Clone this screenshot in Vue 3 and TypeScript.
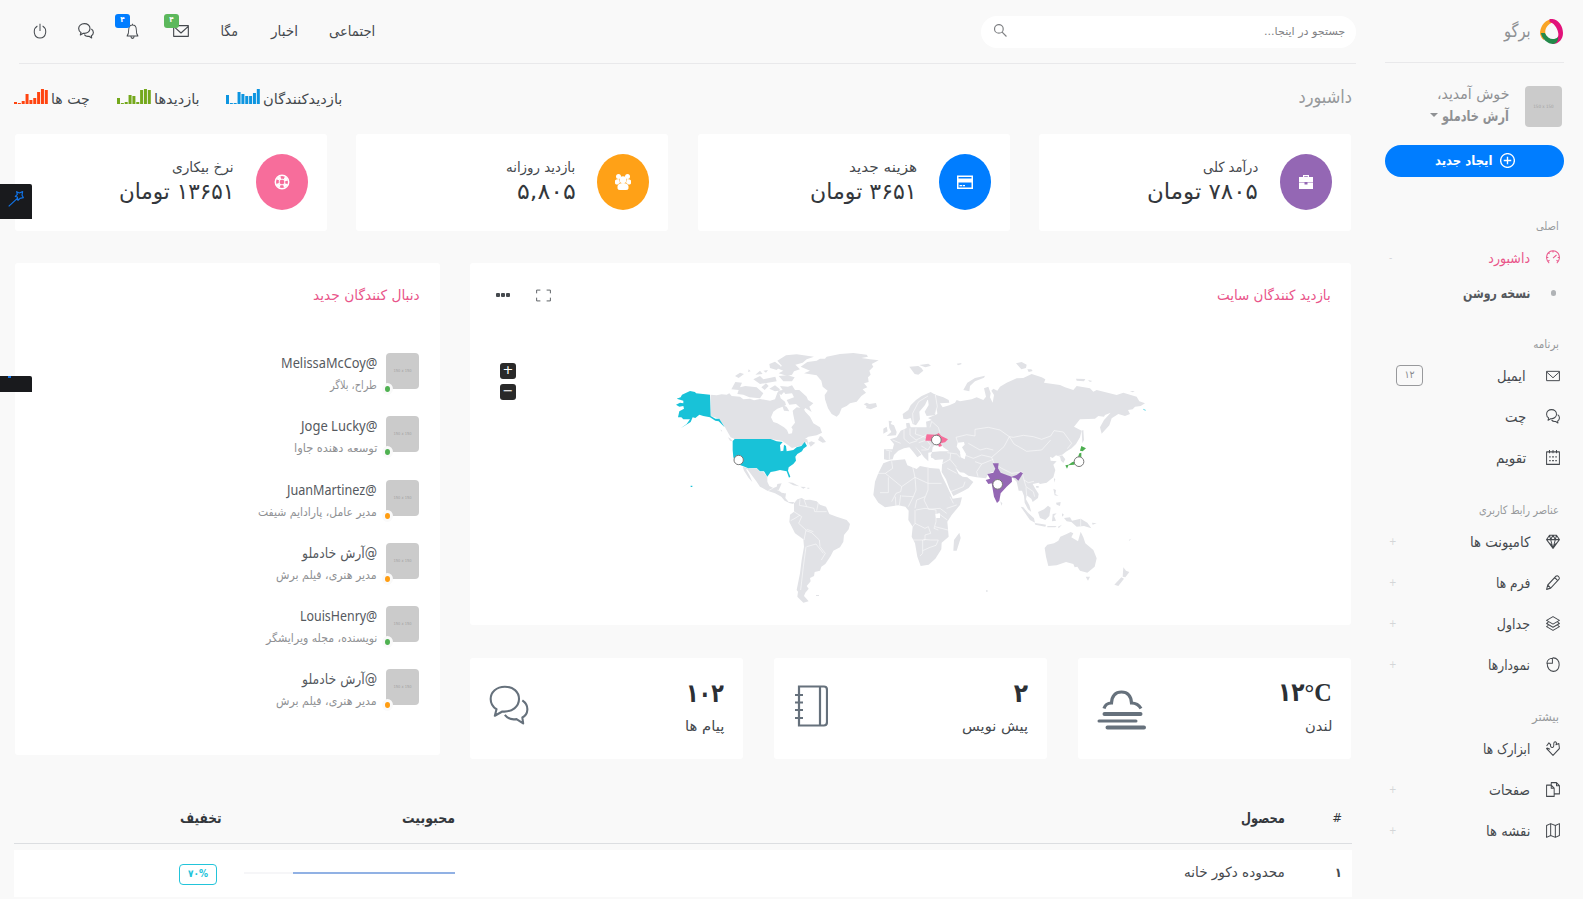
<script setup lang="ts">
import { defineComponent, h, onMounted, ref } from 'vue'

/* One line of text squeezed or stretched horizontally to a given width. */
const Fit = defineComponent({
  props: { w: { type: Number, required: true }, t: { type: String, required: true }, ltr: Boolean },
  setup(props) {
    const inner = ref<HTMLElement | null>(null)
    const k = ref(1)
    onMounted(() => {
      if (inner.value) k.value = props.w / inner.value.offsetWidth
    })
    return () =>
      h('span', { class: 'fit', style: { width: props.w + 'px' } }, [
        h('span', { ref: inner, class: 'fit-in', dir: props.ltr ? 'ltr' : 'rtl', style: { transform: `scaleX(${k.value})` } }, props.t),
      ])
  },
})

const paths: Record<string, string> = {
  mail: 'M1 4H23V20H1ZM1 5L12 15L23 5',
  chat: 'M9.500 1C4.500 1 1 4.200 1 8.200C1 10.800 2.500 13 4.500 14.200L3.500 18L8 15.500C14 16 18 12.500 18 8.200C18 4 14.500 1 9.500 1ZM20 9C24.500 12 23.500 17.500 20 19L20.500 22.500L16.500 20C13.500 20.500 11 19.500 9.500 17.500',
  bell: 'M2 19.500C4.500 17 5 14.500 5 10C5 5.500 8 3 12 3C16 3 19 5.500 19 10C19 14.500 19.500 17 22 19.500ZM12 1V3M9 20C9 24 15 24 15 20',
  power: 'M12 1V12M7.500 4.500C-1 9 1 22.500 12 22.500C23 22.500 25 9 16.500 4.500',
  search: 'M9 1A8 8 0 1 1 9 17A8 8 0 1 1 9 1ZM15 15L23 23',
  gauge: 'M5.500 21A11 11 0 1 1 18.500 21M12 13L18 8M12 1V4M1 12H4M20 12H23M4 4L6 6M3.500 18L6 16.500M20.500 18L18 16.500',
  cal: 'M1 3H23V23H1ZM6 0V5M12 0V5M18 0V5M5.500 11H8M10.500 11H13.500M16 11H18.500M5.500 17H8M10.500 17H13.500M16 17H18.500',
  gem: 'M6 2H18L23 9L12 23L1 9ZM1 9H23M6 2L8 9L12 23L16 9L18 2M8 9L12 2L16 9M4 13L12 20L20 13',
  pen: 'M1 23L3 16L17 2Q19 0 21.500 2.500Q24 5 22 7L8 21ZM3 16L8 21M15 4L20 9',
  layers: 'M12 1L23 7L12 13L1 7ZM4 10L1 12L12 18L23 12L20 10M4 15L1 17L12 23L23 17L20 15',
  pie: 'M11 2V10H1.500C2 5.500 6 2 11 2ZM11 1.500C19 0.500 23 7 22.500 13C22 19 18 23 12.500 23C6.500 23 2 18 2 10',
  puzzle: 'M1 8L5 3L8 6C7 9 9 11 12 10C15 8 12 5 14 2C17 0 19 3 17 6L22 4L23 12L12 23L1 12C3 10 4 13 7 13',
  files: 'M1 5H9L14 10V23H1ZM9 5V10H14M9 5V1H18L23 6V19H14M18 1V6H23',
  map: 'M1 4L8 1L16 4L23 1V20L16 23L8 20L1 23ZM8 1V20M16 4V23',
  plus: 'M12 1A11 11 0 1 1 12 23A11 11 0 1 1 12 1ZM12 6V18M6 12H18',
  wand: 'M1 23L14 11M11 8L14 5L13 1L17 3L22 1L21 6L23 10L18 11L15 14L14 9Z',
  expand: 'M1 8V2H7M17 2H23V8M23 16V22H17M7 22H1V16',
}
const Ico = defineComponent({
  props: { n: { type: String, required: true }, w: { type: Number, default: 15 }, h: { type: Number, default: 15 }, s: { type: Number, default: 1.7 } },
  setup(p) {
    return () =>
      h('svg', { class: 'ico', width: p.w, height: p.h, viewBox: '0 0 24 24', preserveAspectRatio: 'none', fill: 'none', stroke: 'currentColor', 'stroke-width': p.s, 'stroke-linejoin': 'round' }, [
        h('path', { d: paths[p.n] }),
      ])
  },
})

interface MenuItem { t: string; w: number; icon: string; mark?: string; kind?: string }
const groups: { title: string; w: number; cls: string; items: MenuItem[] }[] = [
  { title: 'اصلی', w: 23, cls: 'g1', items: [{ t: 'داشبورد', w: 42, icon: 'gauge', mark: '-', kind: 'active' }, { t: 'نسخه روشن', w: 67, icon: '', kind: 'sub' }] },
  { title: 'برنامه', w: 26, cls: 'g2', items: [{ t: 'ایمیل', w: 29, icon: 'mail', mark: '12', kind: 'leaf' }, { t: 'چت', w: 21, icon: 'chat', kind: 'leaf' }, { t: 'تقویم', w: 30, icon: 'cal', kind: 'leaf' }] },
  { title: 'عناصر رابط کاربری', w: 80, cls: 'g3', items: [{ t: 'کامپونت ها', w: 60, icon: 'gem', mark: '+' }, { t: 'فرم ها', w: 34, icon: 'pen', mark: '+' }, { t: 'جداول', w: 33, icon: 'layers', mark: '+' }, { t: 'نمودارها', w: 42, icon: 'pie', mark: '+' }] },
  { title: 'بیشتر', w: 27, cls: 'g4', items: [{ t: 'ابزارک ها', w: 47, icon: 'puzzle' }, { t: 'صفحات', w: 41, icon: 'files', mark: '+' }, { t: 'نقشه ها', w: 44, icon: 'map', mark: '+' }] },
]

const sparks = [
  { t: 'بازدیدکنندگان', w: 79, c: '#0d95e0', bars: [9, 1, 1, 12, 10, 8, 8, 11, 15] },
  { t: 'بازدیدها', w: 46, c: '#74a81c', bars: [6, 1, 2, 9, 8, 2, 14, 15, 14] },
  { t: 'چت ها', w: 39, c: '#ff4410', bars: [2, 1, 3, 10, 4, 6, 12, 15, 14] },
]

const stats = [
  { l: 'درآمد کلی', lw: 55, v: '۷۸۰۵ تومان', vw: 111, c: '#9467b4', i: 'bag' },
  { l: 'هزینه جدید', lw: 68, v: '۳۶۵۱ تومان', vw: 107, c: '#007dff', i: 'card' },
  { l: 'بازدید روزانه', lw: 69, v: '۵,۸۰۵', vw: 59, c: '#ffa117', i: 'users' },
  { l: 'نرخ بیکاری', lw: 62, v: '۱۳۶۵۱ تومان', vw: 115, c: '#f76d9b', i: 'ring' },
]

const people = [
  { n: 'MelissaMcCoy@', w: 96, s: 'طراح، بلاگر', sw: 47, on: true, lat: true },
  { n: 'Joge Lucky@', w: 76, s: 'توسعه دهنده جاوا', sw: 83, on: true, lat: true },
  { n: 'JuanMartinez@', w: 90, s: 'مدیر عامل، پارادایم شیفت', sw: 119, on: false, lat: true },
  { n: '@آرش خادملو', w: 75, s: 'مدیر هنری، فیلم برش', sw: 101, on: false, lat: false },
  { n: 'LouisHenry@', w: 77, s: 'نویسنده، مجله ویرایشگر', sw: 111, on: true, lat: true },
  { n: '@آرش خادملو', w: 75, s: 'مدیر هنری، فیلم برش', sw: 101, on: false, lat: false },
]

const west = [
  'M152 164L170 166L185 163L200 164L208 160L215 168L240 170L250 178L270 176L282 181L300 177L330 182L345 178L352 158L358 160L362 175L375 185L378 195L368 200L352 206L340 215L333 232L340 246L352 250L372 262L381 270L386 282L396 280L398 268L394 262L405 248L400 225L398 212L410 202L430 205L436 215L445 225L450 230L460 250L480 262L486 278L470 286L445 290L425 304L434 296L442 298L445 318L440 306L420 318L396 324L380 312L365 302L330 297L224 297L212 292L205 280L195 262L178 236L152 228Z',
  'M248 380L268 386L290 385L300 395L310 396L322 411L322 425L328 438L340 444L350 440L352 432L365 430L360 442L356 450L365 458L378 460L376 474L386 486L402 486L400 492L390 490L374 482L364 470L345 460L322 452L300 440L290 425L275 405L262 388L258 388L268 405L277 426L266 414L252 392Z',
  'M384 427L398 428L418 439L400 436ZM421 440L438 441L430 446ZM442 443H448V446H442Z',
  'M402 490L412 478L425 474L436 480L450 479L470 484L480 494L498 500L508 522L530 530L560 540L570 552L566 568L552 585L550 605L540 622L520 632L512 648L496 672L484 680L480 692L464 696L462 708L450 714L452 724L440 738L446 746L436 758L432 768L446 784L430 788L412 770L414 755L410 750L420 700L425 660L432 620L430 598L405 580L388 546L390 524L402 515Z',
  'M468 765H477V768H468Z',
  'M422 80L442 66L470 62L480 56L495 56L500 50L540 42L580 39L620 44L624 50L604 54L630 58L656 61L635 72L640 80L628 92L632 104L624 112L626 126L612 130L622 142L608 148L618 158L604 168L590 185L570 190L560 198L545 205L538 222L530 230L515 222L504 205L495 178L494 165L503 152L488 140L484 122L470 106L432 100L450 92Z',
  'M611 193L620 188L628 192L648 189L651 200L632 208L618 204L620 198Z',
  'M352 62L378 46L410 43L462 50L440 58L428 68L406 74L420 88L402 94L396 104L382 108L356 100L370 92L350 84L366 78ZM328 72L345 65L362 78L350 90L330 84Z',
  'M328 146L345 136L360 148L352 158L364 165L372 156L360 138L384 140L396 136L405 150L418 150L440 170L444 180L460 190L448 200L455 216L436 204L430 212L408 192L388 194L380 180L402 172L396 160L376 162L368 150L345 154Z',
  'M214 148L226 126L246 128L240 142L256 138L290 142L310 160L300 175L268 172L250 164L232 162L236 150ZM304 142L318 130L326 138L314 150ZM280 118L300 108L310 118L346 110L350 124L300 132ZM225 108L240 98L252 102L236 114ZM266 88L272 94L264 96ZM286 104L300 92L308 102ZM310 92L324 90L318 98ZM356 108L382 106L404 112L396 124L370 124ZM366 195L380 200L388 214L372 212Z',
  'M474 300L480 288L486 290L498 306L488 308ZM445 308L454 304L466 308L452 320ZM204 292L212 296L218 304L210 302ZM182 268L187 274L183 274Z',
]
const alaska = 'M50 176L62 172L66 164L90 153L105 156L108 160L150 164L152 228L166 236L178 236L194 262L176 244L166 242L150 232L130 228L118 224L106 234L98 232L92 246L62 265L80 252L90 238L70 238L64 232L54 232L58 214L72 206L70 198L58 200L48 194L60 188L70 190L70 182Z'
const usa = 'M218 303L224 297L332 297L350 304L368 306L360 316L362 334L370 332L372 314L378 318L380 334L400 330L410 322L424 318L434 306L441 318L430 326L426 334L412 342L406 350L408 362L400 372L386 382L384 392L391 410L387 413L380 394L360 390L345 394L332 396L322 410L312 394L300 394L290 384L265 385L248 378L232 372L220 352L218 330ZM92 437H97V441H92Z'
const east = [
  'M148 80L175 78L184 84L190 92L175 104L164 102ZM178 75L205 71L213 77L196 82ZM290 71L304 69V73L294 76ZM0 42L18 48L0 52Z',
  'M310 150L322 128L345 114L375 107L372 113L345 124L330 138L328 154ZM468 70L485 66L500 74L498 84L484 88ZM502 88L514 88L518 93L506 96ZM648 116L676 117L672 124L650 122ZM684 120L697 123L690 126ZM810 153L824 153L818 157Z',
  'M128 222L145 210L152 196L168 180L185 168L212 156L226 164L215 176L202 180L195 195L178 215L180 238L168 256L158 252L152 234L140 238L130 236Z',
  'M203 172L226 162L232 200L225 226L200 228L194 215L206 195Z',
  'M226 164L250 172L266 180L268 188L240 190L248 202L268 196L285 188L290 180L300 184L335 178L350 172L370 180L378 170L372 145L385 140L392 160L390 172L398 188L402 165L394 152L400 146L412 152L420 140L440 128L470 115L490 114L515 102L545 112L556 118L552 128L600 135L615 142L640 150L650 138L690 145L700 155L710 150L770 165L790 158L830 170L838 184L855 190L842 198L825 200L818 208L804 210L810 222L795 228L775 222L755 235L748 256L725 281L720 262L732 240L752 218L735 225L732 230L715 228L705 236L660 238L642 260L665 272L660 292L648 312L635 325L618 335L606 345L616 358L610 369L603 362L600 350L588 346L578 354L570 350L572 362L590 364L580 374L586 390L580 412L560 428L540 432L536 428L518 432L526 446L536 462L534 474L518 486L514 476L500 466L498 478L508 496L514 516L504 508L494 488L492 468L486 452L476 452L470 425L455 410L400 395L386 400L378 415L350 412L325 407L312 398L300 397L286 382L296 402L308 410L322 412L340 426L326 444L310 453L280 468L268 445L258 418L245 396L246 376L250 358L225 360L212 348L216 336L205 338L205 364L192 352L180 335L164 318L178 336L184 344L172 352L160 336L148 322L132 325L115 332L102 345L98 358L82 360L72 358L72 328L98 328L102 312L90 298L110 292L122 272L140 264L138 250L148 248L152 262L200 262L198 245L215 240L204 234L232 222Z',
  'M86 242L96 244L92 252L102 256L110 276L108 286L80 288L94 276L88 264ZM70 266L80 260L83 274L70 281Z',
  'M70 370L90 362L135 358L142 376L170 387L180 378L210 384L238 386L246 408L258 432L272 462L278 476L306 472L300 495L275 525L262 545L266 590L245 608L244 628L226 656L206 674L182 678L172 650L165 610L155 590L158 560L145 540L146 512L136 500L115 496L75 502L55 488L40 465L45 425L55 400Z',
  'M298 578L302 594L290 632L280 632L282 600ZM421 484L427 490L424 497ZM665 272L670 270L672 300L667 310ZM582 415L586 417L582 428ZM528 438H536V443H529ZM378 751H383V755H378Z',
  'M482 500L490 502L504 518L522 535L525 548L510 540ZM524 549L545 552L558 554L556 560L526 554ZM534 516L552 508L564 497L572 503L568 528L556 540L540 534ZM578 522L590 520L582 528L588 542L576 544ZM580 446L588 450L586 462L596 468L584 466ZM588 488L602 486L600 498L590 494ZM562 558L590 558L586 562H562ZM594 560L606 554L596 565ZM606 520L612 524L606 530Z',
  'M612 534L630 532L636 542L662 536L682 548L694 565L672 558L650 560L634 546L620 544ZM696 548L710 550L698 554ZM752 612L762 618ZM806 600L814 596L808 602Z',
  'M554 624L562 614L582 610L595 602L601 590L620 582L632 576L640 580L634 592L654 604L662 575L670 592L676 610L700 630L710 655L704 680L682 698L660 692L652 680L644 682L640 672L618 666L590 676L565 678L558 650ZM677 710L690 710L684 722ZM790 682L798 692L808 696L796 712L788 710ZM784 712L792 716L775 738L763 734Z',
]
const borders = [
  'M226 164L232 200L225 222M160 250L158 220L176 185L204 168M210 262L215 244L235 262L240 278M150 265L150 285L168 300L190 290L200 283M168 265L166 282L196 292M132 268L132 296L148 310L172 302M98 300L122 310M176 308L200 300L212 316L204 330L184 318M184 330L200 330M78 330L96 334M88 334V358',
  'M294 310L288 292L320 284L345 288L345 268L385 262L420 270L448 290L460 292L490 286L520 290L545 298L572 288L582 272L610 276L635 310L622 326',
  'M448 290L462 312L500 334L545 330L572 300M300 340L340 355L365 345L395 352L432 320L448 290M325 310L360 330L380 325L400 330M395 352L402 370L425 385L455 400L486 396L492 420L505 428L522 424M345 365L365 372L350 395L354 410M365 372L400 358M262 338L290 342L300 352M270 358L290 382M245 372L270 358L272 340M262 385L290 400M272 455L310 440L315 425M492 420L498 440L520 455L524 470M500 466L498 442',
  'M95 364L98 385L76 400L125 440L165 412L158 380M125 440L122 455L108 460L95 485M76 400H54M85 412V458H60M165 412L168 450L160 470L125 468M204 384V430H245M165 412L204 430V450L192 480L206 508L240 505L260 520M108 500L106 470M118 496L122 465M160 470L145 500M165 505L170 480L195 470M165 510L165 550L158 560M165 550L195 565L205 560L212 580L195 585V600H156M168 510L195 505L228 510V545L222 565L235 570M188 600V640L180 648M188 632L210 622L228 616L235 600L212 600L190 598M260 505L290 495M235 520L262 540M225 560L264 570M270 470L280 490',
  'M662 536V558M608 345L590 350',
]
const westBorders = 'M432 478L440 500L462 505L464 515L500 515M475 488L470 512M420 478L418 496L440 500M402 515L425 530L416 550L438 570M438 570L432 600M438 572L455 578L478 600L480 620L496 640L484 660M440 620L468 612L490 640M438 620L430 680L422 750M392 542L405 535L420 525M460 575L440 568M325 452L340 444M352 450L376 460'
</script>

<template>
  <div class="app" dir="rtl">
    <aside class="side">
      <div class="brand">
        <svg width="23" height="25" viewBox="0 0 24 25" preserveAspectRatio="none">
          <path d="M12 0C3 2 0 9 0 15C1 18 2 20 4 21L6 16C4 10 8 5 14 3Z" fill="#f9a526" />
          <path d="M10 0C18-1 24 6 24 14C24 20 20 25 13 25L10 21C16 22 20 19 19 14C18 8 14 4 10 3Z" fill="#e2127a" />
          <path d="M1 14C2 20 8 25 14 25C18 24 19 21 19 18C14 22 8 20 5 14Z" fill="#23894a" />
        </svg>
        <Fit :w="27" t="برگو" />
      </div>
      <div class="user">
        <div class="ph" dir="ltr">150 x 150</div>
        <div class="who">
          <Fit :w="72" t="خوش آمدید،" />
          <div class="nm"><Fit :w="67" t="آرش خادملو" /><i class="caret"></i></div>
        </div>
      </div>
      <div class="create"><Ico class="pi-up" n="plus" :w="15" :h="15" :s="2.2" /><Fit :w="58" t="ایجاد جدید" /></div>
      <nav>
        <section v-for="g in groups" :key="g.title" :class="['grp', g.cls]">
          <div class="gt"><Fit :w="g.w" :t="g.title" /></div>
          <div v-for="m in g.items" :key="m.t" :class="['mi', m.kind]">
            <span class="mic"><Ico v-if="m.icon" :n="m.icon" :w="14" :h="m.icon === 'mail' ? 14 : 15" /><i v-else class="bul"></i></span>
            <Fit :w="m.w" :t="m.t" />
            <span v-if="m.mark === '12'" class="cnt">۱۲</span>
            <span v-else-if="m.mark" class="mk">{{ m.mark }}</span>
          </div>
        </section>
      </nav>
    </aside>

    <main>
      <header>
        <div class="search"><Fit :w="81" t="جستجو در اینجا..." /><Ico class="pi-up" n="search" :w="13" :h="13" :s="2.2" /></div>
        <div class="links">
          <Fit class="l1" :w="46" t="اجتماعی" />
          <Fit class="l2" :w="27" t="اخبار" />
          <Fit class="l3" :w="18" t="مگا" />
          <span class="ic mailic"><Ico n="mail" :w="16" :h="16" /><b class="bd green">۴</b></span>
          <span class="ic bellic"><Ico n="bell" :w="13" :h="16" /><b class="bd blue">۴</b></span>
          <span class="ic"><Ico n="chat" :w="16" :h="16" /></span>
          <span class="ic last"><Ico n="power" :w="14" :h="16" /></span>
        </div>
      </header>

      <div class="title">
        <Fit class="pt" :w="54" t="داشبورد" />
        <div class="sparks">
          <div v-for="s in sparks" :key="s.t" class="spark">
            <Fit :w="s.w" :t="s.t" />
            <svg width="34" height="16" viewBox="0 0 34 16">
              <rect v-for="(b, i) in s.bars" :key="i" :x="i * 3.85" :y="16 - b" width="3" :height="b" :fill="s.c" />
            </svg>
          </div>
        </div>
      </div>

      <div class="stats">
        <div v-for="s in stats" :key="s.l" class="card stat">
          <span class="circ" :style="{ background: s.c }">
            <svg width="16" height="16" viewBox="0 0 16 16" fill="#fff">
              <template v-if="s.i === 'bag'"><path d="M5 3V1H11V3H15V8H1V3ZM6.200 3H9.800V2.200H6.200ZM1 8.600H6.500V10.500H9.500V8.600H15V15H1Z" fill-rule="evenodd" /></template>
              <template v-else-if="s.i === 'card'"><path d="M0 1.500H16V15H0ZM1.500 3V4.500H14.500V3ZM1.500 8.500V13.500H14.500V8.500ZM2.500 11H5V12.300H2.500ZM5.700 11H8V12.300H5.700Z" fill-rule="evenodd" /></template>
              <template v-else-if="s.i === 'users'"><circle cx="3.500" cy="2.600" r="2.500" /><circle cx="12.500" cy="2.600" r="2.500" /><circle cx="8" cy="5.700" r="3.500" /><path d="M0 9.500V6.500Q0.500 5 3.800 5L5 8.500L3 10.500H1ZM16 9.500V6.500Q15.500 5 12.200 5L11 8.500L13 10.500H15ZM2.500 14.500V12Q3.500 9 8 9Q12.500 9 13.500 12V14.500Q13 16 11 16H5Q3 16 2.500 14.500Z" /></template>
              <template v-else><circle cx="8" cy="8" r="6.700" fill="none" stroke="#fff" stroke-width="1.500" /><circle cx="8" cy="8" r="4.700" fill="none" stroke="#fff" stroke-width="3" stroke-dasharray="3.700 3.680" stroke-dashoffset="-1.800" /><circle cx="8" cy="8" r="2.900" fill="none" stroke="#fff" stroke-width="1" /></template>
            </svg>
          </span>
          <div class="st"><Fit class="sl" :w="s.lw" :t="s.l" /><Fit class="sv" :w="s.vw" :t="s.v" /></div>
        </div>
      </div>

      <div class="mid">
        <div class="midr">
          <div class="card mapc">
            <div class="ch"><Fit :w="114" t="بازدید کنندگان سایت" /><span class="tools"><Ico n="expand" :w="15" :h="13" :s="1.6" /><span class="dots"><i></i><i></i><i></i></span></span></div>
            <svg class="world" width="500" height="270" viewBox="0 0 1500 810">
              <g class="land">
                <path v-for="p in west" :key="p" :d="p" />
                <path :d="alaska + usa" fill="#18c2d8" />
                <path class="bo" :d="westBorders" />
              </g>
              <g class="land" transform="translate(600 0)">
                <path v-for="p in east" :key="p" :d="p" />
                <path d="M216 336L218 322L226 314L238 321L246 316L250 322L268 334L240 334Z M293 308L312 306L314 314L306 322L318 342L314 358L302 352L300 334L290 320Z M226 522L240 520L240 534L228 534Z" fill="#fff" />
                <path d="M212 344L222 338L262 336L270 350L240 356L214 354Z" />
                <path v-for="p in borders" :key="p" class="bo" :d="p" />
                <path d="M200 283L228 284L236 279L244 288L264 298L255 307L242 310L246 318L238 320L232 312L210 302L196 302Z" fill="#f76d9b" />
                <path d="M398 370L416 370L414 385L422 398L440 405L455 410L470 405L482 396L489 400L475 422L466 414L455 412L456 425L440 440L422 460L418 482L411 489L402 470L395 430L385 432L377 420L390 416L382 402L400 398L406 386Z" fill="#9467b4" />
                <path d="M664 318L678 325L668 334L660 332ZM658 340L664 338L664 352L655 366L642 374L624 376L636 367L650 362ZM616 376L626 374L621 386Z" fill="#4caf50" />
                <path d="M850 208L857 211" stroke="#18c2d8" stroke-width="2" />
              </g>
              <g class="pins"><circle cx="236" cy="360" r="14" /><circle cx="829" cy="300" r="14.500" /><circle cx="1013" cy="433" r="14.500" /><circle cx="1257" cy="365" r="14.500" /></g>
            </svg>
            <div class="zoom"><span>+</span><span>−</span></div>
          </div>
          <div class="trio">
            <div class="card tc">
              <div class="tt"><Fit class="tn serif" :w="54" t="۱۲°C" ltr /><Fit class="tl" :w="28" t="لندن" /></div>
              <svg width="49" height="40" viewBox="0 0 49 40" fill="none" stroke="#66717c" stroke-linecap="round"><path d="M7 18.500C8 15 11 13 14.500 13C15 5 19 2 24.500 2C30 2 34 5 34.500 13C39 13 42 15 44 18.500" stroke-width="3.200" stroke-linecap="butt" /><path d="M7.500 24H43.500M10.500 37.500H47" stroke-width="4" /><path d="M2 31H39" stroke-width="3" /></svg>
            </div>
            <div class="card tc">
              <div class="tt"><Fit class="tn" :w="14" t="۲" /><Fit class="tl" :w="66" t="پیش نویس" /></div>
              <svg class="nb" width="33" height="42" viewBox="0 0 33 42" fill="none" stroke="#66717c" stroke-width="2.200"><path d="M4 1.500H29Q32 1.500 32 5V37Q32 40.500 29 40.500H4ZM25 1.500V40.500M0 10H8M0 17.500H8M0 25H8M0 33H8" /></svg>
            </div>
            <div class="card tc">
              <div class="tt"><Fit class="tn" :w="38" t="۱۰۲" /><Fit class="tl" :w="39" t="پیام ها" /></div>
              <span class="bigchat"><Ico n="chat" :w="40" :h="41" :s="1.25" /></span>
            </div>
          </div>
        </div>
        <div class="card foll">
          <div class="ch"><Fit :w="107" t="دنبال کنندگان جدید" /></div>
          <div v-for="(p, i) in people" :key="i" class="per">
            <div class="ph sm" dir="ltr">150 x 150<i :class="{ on: p.on }"></i></div>
            <div class="pi"><Fit :class="['pn', { lat: p.lat }]" :w="p.w" :t="p.n" :ltr="p.lat" /><Fit class="ps" :w="p.sw" :t="p.s" /></div>
          </div>
        </div>
      </div>

      <div class="table">
        <div class="tr th"><span class="c1">#</span><span class="c2"><Fit :w="44" t="محصول" /></span><span class="c3"><Fit :w="53" t="محبوبیت" /></span><span class="c4"><Fit :w="42" t="تخفیف" /></span></div>
        <div class="tr td"><span class="c1">۱</span><span class="c2"><Fit :w="101" t="محدوده دکور خانه" /></span><span class="c3"><i class="bar"><i></i></i></span><span class="c4"><b class="off"><Fit :w="20" t="۷۰%" ltr /></b></span></div>
      </div>
    </main>

    <div class="float f1"><Ico n="wand" :w="16" :h="16" :s="1.8" /></div>
    <div class="float f2"><i></i></div>
  </div>
</template>

<style>
html, body { margin: 0; overflow: hidden; background: #f9f9f9; }
.fit { display: inline-block; white-space: nowrap; line-height: 20px; height: 20px; flex: none; text-align: right; }
.fit-in { display: inline-block; transform-origin: right center; float: right; }
.ico { display: block; flex: none; }
</style>

<style scoped>
.app { position: relative; display: flex; width: 1583px; height: 899px; overflow: hidden; background: #f9f9f9; color: #45494e; font: 14px/20px 'DejaVu Sans Condensed', 'DejaVu Sans', sans-serif; }
.side { width: 179px; padding: 0 19px 0 0; flex: none; margin-left: 29px; }
main { width: 1337px; flex: none; }
.card { background: #fff; border-radius: 3px; }
.pi-up { margin-bottom: 2px; }
.brand { height: 63px; box-sizing: border-box; border-bottom: 1px solid #e9e9eb; display: flex; align-items: center; gap: 9px; color: #8f9194; font-size: 18px; }
.brand svg { margin-right: 1px; }
.user { display: flex; gap: 16px; padding: 23px 2px 0 0; height: 59px; color: #8f9194; }
.ph { position: relative; width: 37px; height: 41px; border-radius: 4px; background: #cbcbcb; color: #a3a3a3; font-size: 4.500px; line-height: 41px; text-align: center; }
.who { display: flex; flex-direction: column; gap: 2px; margin-top: -2px; font-size: 15px; }
.nm { display: flex; font-weight: bold; gap: 4px; }
.caret { width: 0; border: 4px solid transparent; border-top-color: #8f9194; margin-top: 7px; height: 0; }
.create { height: 32px; border-radius: 16px; background: #007dff; color: #fff; display: flex; align-items: center; justify-content: center; gap: 7px; font-weight: bold; font-size: 13px; }
.gt { height: 20px; padding-right: 5px; font-size: 11.500px; color: #97999c; }
.g1 { padding-top: 39px; }
.g2 { padding-top: 24px; }
.g3 { padding-top: 23px; }
.g4 { padding-top: 23px; }
.mi { display: flex; align-items: center; height: 41px; padding-right: 4px; color: #45494e; }
.mi :deep(.fit) { margin-right: 16px; }
.g1 .mi { height: 35px; }
.g1 .gt { height: 24px; }
.g2 .gt, .g3 .gt, .g4 .gt { height: 21px; }
.g3, .g4 { margin-top: -1px; }
.mi.leaf :deep(.fit) { margin-right: 20px; }
.mi.active { color: #e9558a; }
.mi.sub { font-weight: bold; color: #55595e; }
.mic { width: 14px; flex: none; }
.bul { display: block; width: 5px; height: 6px; border-radius: 3px; background: #b0b3b6; margin: 0 4px; }
.mk { margin-right: auto; margin-left: 4px; color: #d4d6d8; font-size: 10px; }
.cnt { box-sizing: border-box; width: 27px; height: 21px; border: 1px solid #98999c; border-radius: 4px; margin-right: auto; margin-left: 9px; text-align: center; font-size: 10.500px; line-height: 17px; color: #88898c; transform: translateX(2px); }
.gt, .mi { box-sizing: border-box; }

header { display: flex; align-items: center; height: 64px; box-sizing: border-box; border-bottom: 1px solid #e9e9eb; justify-content: space-between; }
.search { width: 375px; height: 32px; box-sizing: border-box; border-radius: 16px; background: #fff; display: flex; align-items: center; justify-content: space-between; padding: 0 11px 0 13px; font-size: 11px; color: #7f8184; }
.links { display: flex; align-items: center; font-size: 14px; padding-left: 14px; margin-bottom: 2px; }
.l1 { margin-left: 31px; }
.l2 { margin-left: 33px; }
.l3 { margin-left: 31px; }
.ic { position: relative; }
.mailic { margin-left: 34px; }
.bellic { margin-left: 32px; }
.last { margin-right: 31px; }
.bd { position: absolute; width: 15px; height: 14px; border-radius: 3px; color: #fff; font-size: 8px; line-height: 12px; text-align: center; left: -9px; top: -9px; }
.green { background: #5cb85c; }
.blue { background: #007dff; left: -11px; }
.title { height: 70px; display: flex; justify-content: space-between; align-items: flex-start; padding: 23px 4px 0 0; box-sizing: border-box; }
.pt { font-size: 18px; color: #97999c; }
.sparks { display: flex; gap: 26.500px; margin-left: -5px; }
.spark { display: flex; gap: 3px; font-size: 14px; }
.spark :deep(.fit) { margin-top: 2px; }
.spark svg { margin-top: 1px; }
.stats { display: flex; justify-content: space-between; padding-right: 5px; margin-left: -4px; }
.stat { width: 312px; height: 97px; box-sizing: border-box; display: flex; padding: 20px 19px 0 0; gap: 22px; }
.circ { width: 52px; height: 56px; border-radius: 50%; display: flex; align-items: center; justify-content: center; }
.st { display: flex; flex-direction: column; align-items: flex-start; padding-top: 3px; gap: 5px; }
.sl { font-size: 14px; }
.sv { font-size: 22px; color: #33373c; }
.mid { display: flex; justify-content: space-between; margin: 32px 5px 0 -4px; }
.mapc { position: relative; width: 881px; height: 362px; }
.ch { display: flex; justify-content: space-between; padding: 22px 20px 0; color: #e9558a; height: 20px; }
.tools { display: flex; align-items: center; gap: 26px; color: #55595e; padding-left: 6px; }
.dots { display: flex; gap: 1px; }
.dots i { width: 4px; height: 4px; border-radius: 1px; background: #45494e; }
.world { display: block; margin: 35px 191px 0 0; }
.land { fill: #e1e2e6; stroke: none; }
.bo { fill: none; stroke: #fff; stroke-width: 2; stroke-opacity: .8; }
.pins circle { fill: #fff; stroke: #777; stroke-width: 3; }
.zoom { position: absolute; left: 30px; top: 100px; display: flex; flex-direction: column; gap: 5px; }
.zoom span { width: 16px; height: 16px; border-radius: 3px; background: #292929; color: #fff; font: 13px/14px 'DejaVu Sans', sans-serif; text-align: center; }
.trio { display: flex; justify-content: space-between; margin-top: 33px; }
.tc { width: 273px; height: 101px; box-sizing: border-box; padding: 20px 19px 0; display: flex; justify-content: space-between; }
.tt { display: flex; flex-direction: column; gap: 13px; padding-top: 5px; }
.tn { font-size: 26px; font-weight: bold; color: #2c3035; }
.serif { font-family: 'Liberation Serif', 'DejaVu Sans Condensed', serif; }
.tc > svg { margin-top: 12px; }
.tc > svg.nb { margin: 7px 0 0 2px; }
.bigchat { color: #66717c; margin-top: 7px; }
.foll { width: 425px; height: 492px; }
.foll .ch { margin-bottom: 48px; }
.per { display: flex; gap: 9px; height: 63.250px; padding-right: 21px; }
.ph.sm { width: 33px; height: 36px; line-height: 36px; font-size: 4px; }
.sm i { position: absolute; left: -4px; bottom: -6px; width: 5px; height: 6px; border-radius: 50%; background: #ff9d12; border: 3px solid #fafafa; }
.sm i.on { background: #4fb151; }
.pi { display: flex; flex-direction: column; gap: 2px; }
.pn { font-size: 14px; color: #55595e; }
.lat { font-family: 'Noto Sans', 'Open Sans', sans-serif; }
.ps { font-size: 11.500px; color: #8f9194; }
.table { margin: 36px 4px 0 -5px; }
.tr { display: flex; align-items: center; }
.th { height: 49px; border-bottom: 1px solid #dcdee1; font-weight: bold; color: #33373c; margin-bottom: 6px; box-sizing: border-box; font-size: 14.500px; padding-top: 2px; }
.th .c1 { font-weight: normal; padding-bottom: 4px; }
.td { height: 47px; background: #fff; }
.td .c1 { font-weight: bold; padding-bottom: 2px; }
.td .c2 { padding-top: 1px; }
.c1 { width: 56px; padding-right: 10px; margin-left: 1px; font-size: 13px; flex: none; }
.c2 { width: 830px; flex: none; }
.c3 { width: 233px; flex: none; }
.bar { display: block; width: 211px; height: 2px; background: #f6f6f8; margin-bottom: 1px; }
.bar i { display: block; height: 2px; width: 162px; background: #91b1e4; }
.off { display: flex; box-sizing: border-box; width: 38px; height: 21px; border: 1px solid #22c4da; border-radius: 4px; color: #22c4da; font-size: 10.500px; justify-content: center; margin: 2px 5px 0 0; }
.off :deep(.fit) { line-height: 16px; }
.float { position: absolute; left: 0; width: 32px; background: #191a1d; color: #1173e6; border-radius: 0 2px 0 0; }
.f1 { top: 184px; height: 35px; }
.f1 :deep(.ico) { margin: 7px 8px; }
.f2 { top: 376px; height: 16px; }
.f2 i { position: absolute; left: 8px; top: 0; width: 3px; height: 2px; background: #1173e6; }
</style>
